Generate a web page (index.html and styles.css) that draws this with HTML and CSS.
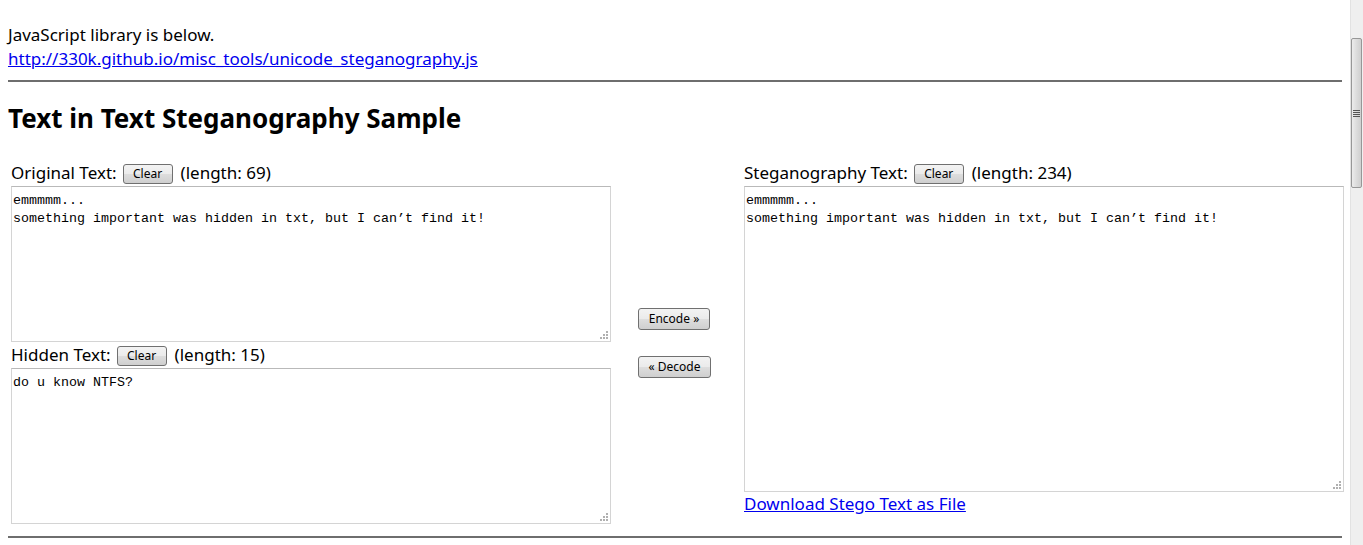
FILE: index.html
```html
<!DOCTYPE html>
<html lang="en">
<head>
<meta charset="utf-8">
<title>Text in Text Steganography Sample</title>
<link rel="stylesheet" href="styles.css">
</head>
<body>
<div class="page">
  <p class="intro">JavaScript library is below.<br><a href="#">http://330k.github.io/misc_tools/unicode_steganography.js</a></p>
  <hr class="rule rule-top">
  <h2 class="title">Text in Text Steganography Sample</h2>
  <div class="workspace">
    <div class="col col-left">
      <div class="label-line"><span>Original Text:</span><button class="btn btn-clear">Clear</button><span>(length: 69)</span></div>
      <textarea class="box box-orig">emmmmm...
something important was hidden in txt, but I can’t find it!</textarea>
      <div class="label-line"><span>Hidden Text:</span><button class="btn btn-clear">Clear</button><span>(length: 15)</span></div>
      <textarea class="box box-hidden">do u know NTFS?</textarea>
    </div>
    <div class="col col-mid">
      <button class="btn btn-act btn-encode">Encode »</button>
      <button class="btn btn-act btn-decode">« Decode</button>
    </div>
    <div class="col col-right">
      <div class="label-line"><span>Steganography Text:</span><button class="btn btn-clear">Clear</button><span>(length: 234)</span></div>
      <textarea class="box box-stego">emmmmm...
something important was hidden in txt, but I can’t find it!</textarea>
      <a class="download" href="#">Download Stego Text as File</a>
    </div>
  </div>
  <hr class="rule rule-bottom">
</div>
<div class="scrollbar"><div class="thumb"><span class="grip"></span></div></div>
</body>
</html>
```

FILE: styles.css
```css
html, body {
  margin: 0;
  padding: 0;
  background: #fff;
  overflow: hidden;
}
body {
  font-family: "Noto Sans", "Noto Sans CJK JP", sans-serif;
  font-size: 17px;
  color: #000;
}
.page {
  width: 1334px;
  padding: 23px 8px 0 8px;
}
.intro {
  margin: 0;
  line-height: 24px;
}
.intro a, .download {
  color: #0000ee;
  text-decoration: underline;
}
.rule {
  border: none;
  height: 2px;
  background: #6e6e6e;
  margin: 0;
}
.rule-top {
  margin-top: 9px;
}
.title {
  margin: 20px 0 0 0;
  font-size: 26px;
  line-height: 32px;
  font-weight: bold;
}
.workspace {
  display: flex;
  margin-top: 26px;
  padding-left: 3px;
}
.col {
  display: flex;
  flex-direction: column;
  flex: none;
}
.col-left {
  width: 600px;
}
.col-right {
  width: 600px;
  align-items: flex-start;
}
.col-mid {
  width: 133px;
  padding-left: 27px;
  box-sizing: border-box;
  align-items: flex-start;
  padding-top: 148px;
}
.label-line {
  height: 26px;
  line-height: 26px;
  white-space: nowrap;
  display: flex;
  align-items: center;
}
.box {
  display: block;
  box-sizing: border-box;
  width: 600px;
  margin: 0;
  padding: 5px 1px 1px 1px;
  border: 1px solid #d4d4d4;
  border-top-color: #b9b9b9;
  font-family: "Liberation Mono", monospace;
  font-size: 13.33px;
  line-height: 18px;
  color: #000;
  resize: both;
  background: #fff;
}
.box::-webkit-resizer {
  background-color: transparent;
  background-image:
    linear-gradient(#b0b0b0, #b0b0b0),
    linear-gradient(#b0b0b0, #b0b0b0),
    linear-gradient(#b0b0b0, #b0b0b0),
    linear-gradient(#b0b0b0, #b0b0b0),
    linear-gradient(#b0b0b0, #b0b0b0),
    linear-gradient(#b0b0b0, #b0b0b0);
  background-size: 2px 2px;
  background-repeat: no-repeat;
  background-position:
    right 2px bottom 8px,
    right 5px bottom 5px,
    right 2px bottom 5px,
    right 8px bottom 2px,
    right 5px bottom 2px,
    right 2px bottom 2px;
}
.box-orig, .box-hidden {
  height: 156px;
}
.box-stego {
  height: 306px;
}
.btn {
  font-family: "Noto Sans", sans-serif;
  font-size: 12px;
  line-height: 14px;
  color: #000;
  border: 1px solid #707070;
  border-radius: 3px;
  background: linear-gradient(#f3f3f3 0%, #ebebeb 48%, #dddddd 52%, #cfcfcf 100%);
  padding: 0;
  margin: 0;
  height: 20px;
  flex: none;
}
.btn-clear {
  width: 50px;
  margin: 1px 8px 0 6px;
}
.btn-act {
  height: 22px;
}
.btn-encode {
  width: 72px;
}
.btn-decode {
  width: 73px;
  margin-top: 26px;
}
.download {
  line-height: 24px;
}
.rule-bottom {
  margin-top: 12px;
}
.scrollbar {
  position: fixed;
  top: 0;
  right: 0;
  width: 13px;
  height: 545px;
  background: #efefef;
  border-left: 1px solid #e2e2e2;
  box-sizing: border-box;
}
.thumb {
  position: absolute;
  top: 38px;
  left: 0;
  width: 11px;
  height: 150px;
  box-sizing: border-box;
  border: 1px solid #979797;
  border-radius: 2px;
  background: linear-gradient(to right, #ececec, #dcdcdc 50%, #cfcfcf);
  display: flex;
  align-items: center;
  justify-content: center;
}
.grip {
  width: 7px;
  height: 7px;
  background: repeating-linear-gradient(#555 0 1px, transparent 1px 2px);
}
```
